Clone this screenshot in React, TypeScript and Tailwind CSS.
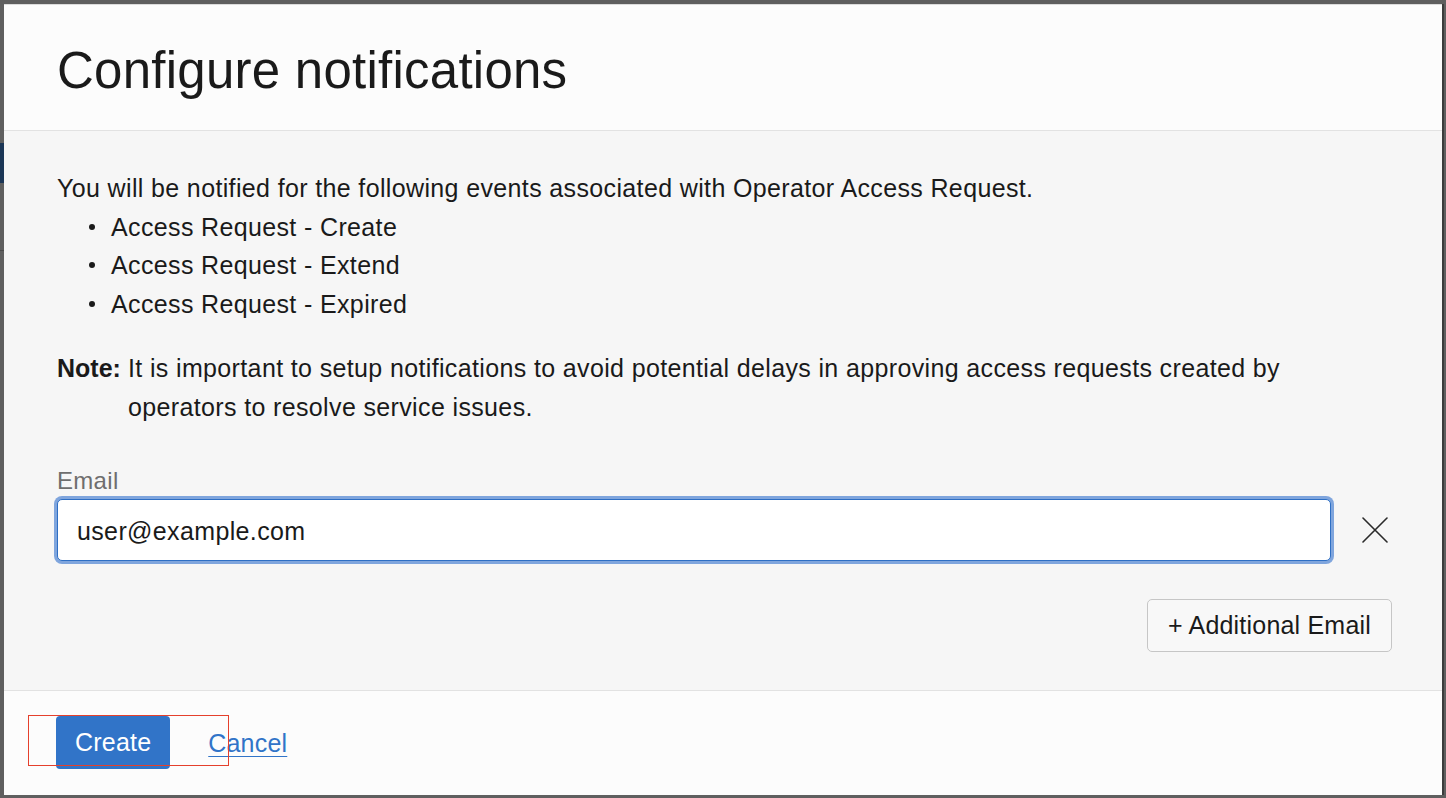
import React from "react";

export default function App() {
  const bullets = ["Access Request - Create", "Access Request - Extend", "Access Request - Expired"];
  return (
    <div className="relative w-[1446px] h-[798px] overflow-hidden bg-[#5f5f5f] font-['Liberation_Sans',Arial,sans-serif] text-[#1a1a1a]">
      {/* dimmed page fragments at left edge */}
      <div className="absolute left-0 top-[143px] w-[4px] h-[40px] bg-[#1b3656]" />
      <div className="absolute left-0 top-[250px] w-[4px] h-[1px] bg-[#4a4a4a]" />

      <div className="flex h-full pt-[4px] pl-[4px] pr-[4px] pb-[3px]">
        <div className="flex flex-col flex-1 bg-[#fcfcfc] border-t border-[#dcdcdc] shadow-[2px_0_0_#3c3c3c]">
          {/* header */}
          <div className="h-[126px] shrink-0 flex items-center pl-[53px] pt-[8px] border-b border-[#e2e2e2] bg-[#fcfcfc]">
            <h1 className="text-[51px] font-normal tracking-[0.25px] text-[#1a1a1a]">Configure notifications</h1>
          </div>

          {/* body */}
          <div className="flex-1 bg-[#f6f6f6] pt-[38px] pl-[53px] pr-[50px] text-[25px] leading-[38.5px] tracking-[0.36px]">
            <p>You will be notified for the following events associated with Operator Access Request.</p>
            <ul>
              {bullets.map((b) => (
                <li key={b} className="flex items-center">
                  <span className="ml-[32px] mr-[16px] w-[6px] h-[6px] rounded-full bg-[#1a1a1a] shrink-0" />
                  <span>{b}</span>
                </li>
              ))}
            </ul>
            <div className="flex mt-[26px]">
              <span className="w-[71px] shrink-0 font-bold tracking-normal">Note:</span>
              <p>
                It is important to setup notifications to avoid potential delays in approving access requests created by
                <br />
                operators to resolve service issues.
              </p>
            </div>

            <div className="mt-[41px] text-[24px] text-[#6e6e6e] leading-[28px] tracking-[0.3px]">Email</div>
            <div className="mt-[4px] flex items-center">
              <div className="flex-1 h-[62px] flex items-center bg-white border border-[#2e6fc4] rounded-[5px] shadow-[0_0_0_3px_#7fa5dd] pl-[19px] pt-[2px]">
                <span className="text-[#1a1a1a]">user@example.com</span>
              </div>
              <div className="w-[35px] ml-[26px] flex items-center justify-center">
                <svg width="26" height="26" viewBox="0 0 26 26" fill="none" stroke="#2a2a2a" strokeWidth="1.6" strokeLinecap="round">
                  <path d="M1 1 L25 25 M25 1 L1 25" />
                </svg>
              </div>
            </div>
            <div className="flex justify-end mt-[38px]">
              <button className="h-[53px] px-[20px] bg-[#f8f8f8] border border-[#c6c6c6] rounded-[5px] text-[25px] text-[#1a1a1a] tracking-[0.2px]">
                + Additional Email
              </button>
            </div>
          </div>

          {/* footer */}
          <div className="h-[105px] shrink-0 border-t border-[#e2e2e2] bg-[#fcfcfc] flex items-start pt-[25px] pl-[52px]">
            <button className="h-[53px] px-[19px] bg-[#3174c8] text-white rounded-[4px] text-[25px] tracking-[0.2px]">
              Create
            </button>
            <a href="#" className="ml-[38px] mt-[9px] text-[25px] text-[#3174c8] underline underline-offset-[4px] decoration-1 tracking-[0.2px]">
              Cancel
            </a>
          </div>
        </div>
      </div>

      {/* annotation rectangle */}
      <div className="absolute left-[28px] top-[715px] w-[201px] h-[51px] border border-[#e5402c]" />
    </div>
  );
}
